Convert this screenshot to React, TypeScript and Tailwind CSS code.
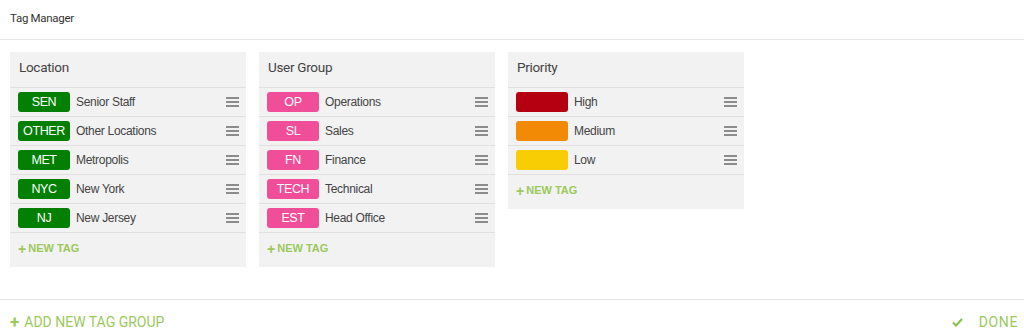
import React from 'react';

type Tag = { code: string; name: string; color: string };
type Group = { title: string; tags: Tag[] };

const GROUPS: Group[] = [
  {
    title: 'Location',
    tags: [
      { code: 'SEN', name: 'Senior Staff', color: 'bg-[#038003]' },
      { code: 'OTHER', name: 'Other Locations', color: 'bg-[#038003]' },
      { code: 'MET', name: 'Metropolis', color: 'bg-[#038003]' },
      { code: 'NYC', name: 'New York', color: 'bg-[#038003]' },
      { code: 'NJ', name: 'New Jersey', color: 'bg-[#038003]' },
    ],
  },
  {
    title: 'User Group',
    tags: [
      { code: 'OP', name: 'Operations', color: 'bg-[#f04e99]' },
      { code: 'SL', name: 'Sales', color: 'bg-[#f04e99]' },
      { code: 'FN', name: 'Finance', color: 'bg-[#f04e99]' },
      { code: 'TECH', name: 'Technical', color: 'bg-[#f04e99]' },
      { code: 'EST', name: 'Head Office', color: 'bg-[#f04e99]' },
    ],
  },
  {
    title: 'Priority',
    tags: [
      { code: '', name: 'High', color: 'bg-[#b40010]' },
      { code: '', name: 'Medium', color: 'bg-[#f28a05]' },
      { code: '', name: 'Low', color: 'bg-[#f9cd03]' },
    ],
  },
];

function DragHandle() {
  return (
    <div className="flex flex-col gap-[2px] w-[13px]">
      <span className="block h-[2px] bg-[#8c8c8c]" />
      <span className="block h-[2px] bg-[#8c8c8c]" />
      <span className="block h-[2px] bg-[#8c8c8c]" />
    </div>
  );
}

function TagGroup({ group }: { group: Group }) {
  return (
    <div className="w-[236px] bg-[#f2f2f2]">
      <div className="h-[36px] pt-[5px] pl-[9px] text-[13.5px] tracking-[-0.3px] leading-[20px] text-[#444] border-b border-[#e0e0e0] font-['Roboto',sans-serif]">
        {group.title}
      </div>
      {group.tags.map((t) => (
        <div key={t.name} className="h-[29px] flex items-center pl-[8px] pr-[7px] border-b border-[#e0e0e0]">
          <span className={`w-[52px] h-[20px] rounded-[3px] flex items-center justify-center text-white text-[12.5px] tracking-[-0.4px] ${t.color}`}>
            {t.code}
          </span>
          <span className="ml-[6px] flex-1 text-[12px] tracking-[-0.3px] text-[#444]">{t.name}</span>
          <DragHandle />
        </div>
      ))}
      <div className="h-[34px] flex items-center pl-[8px] pb-[3px] text-[11px] font-bold text-[#9bc95b]">
        <span className="text-[14px] mr-[2px] leading-none">+</span> NEW TAG
      </div>
    </div>
  );
}

export default function App() {
  return (
    <div className="h-[333px] bg-white flex flex-col font-['Liberation_Sans',Arial,sans-serif] overflow-hidden">
      <div className="h-[40px] shrink-0 border-b border-[#e5e5e5] flex items-center pl-[10px] pb-[2px] text-[11.5px] tracking-[-0.3px] text-[#333] font-['Roboto',sans-serif]">
        Tag Manager
      </div>
      <div className="h-[259px] shrink-0 flex items-start gap-[13px] pl-[10px] pt-[12px]">
        {GROUPS.map((g) => (
          <TagGroup key={g.title} group={g} />
        ))}
      </div>
      <div className="flex-1 border-t border-[#e5e5e5] flex items-start justify-between pt-[12px] pl-[10px] pr-[6px] font-['Roboto',sans-serif] text-[14px] text-[#9bc95b]">
        <div className="flex items-center">
          <span className="text-[17px] font-bold leading-none mr-[5px]">+</span>
          ADD NEW TAG GROUP
        </div>
        <div className="flex items-center">
          <svg width="11" height="9" viewBox="0 0 11 9" className="mr-[16px]">
            <path d="M1 4.5 L4 7.5 L10 1" fill="none" stroke="#8cc152" strokeWidth="2.2" />
          </svg>
          <span className="tracking-[0.6px]">DONE</span>
        </div>
      </div>
    </div>
  );
}
